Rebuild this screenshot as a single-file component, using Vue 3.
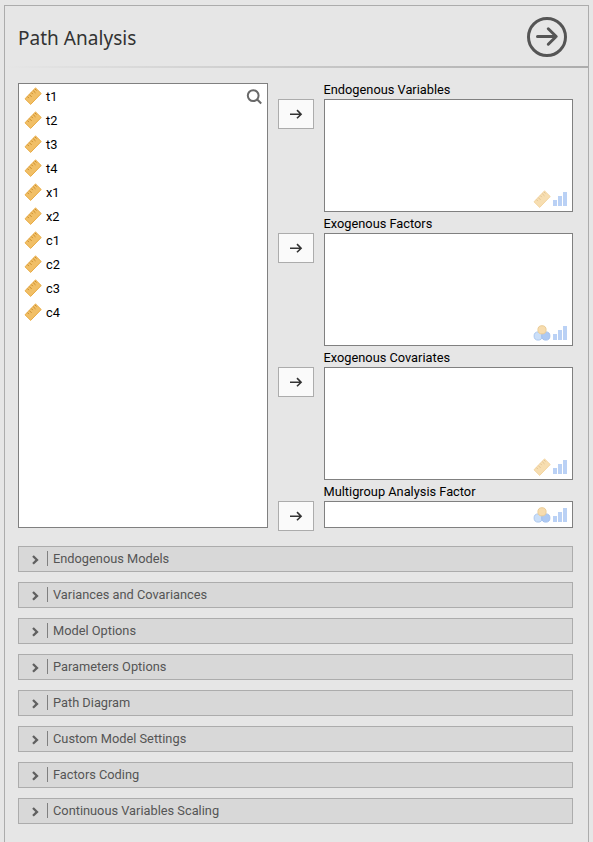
<script setup>
const variables = ['t1', 't2', 't3', 't4', 'x1', 'x2', 'c1', 'c2', 'c3', 'c4']
const targets = [
  { label: 'Endogenous Variables', kind: 'ruler' },
  { label: 'Exogenous Factors', kind: 'nominal' },
  { label: 'Exogenous Covariates', kind: 'ruler' },
  { label: 'Multigroup Analysis Factor', kind: 'nominal', single: true },
]
const sections = [
  'Endogenous Models',
  'Variances and Covariances',
  'Model Options',
  'Parameters Options',
  'Path Diagram',
  'Custom Model Settings',
  'Factors Coding',
  'Continuous Variables Scaling',
]
</script>

<template>
  <main class="panel">
    <header class="header">
      <h1>Path Analysis</h1>
      <svg class="go" width="40" height="40" viewBox="0 0 40 40">
        <circle cx="20" cy="20" r="18.5" />
        <path d="M10.5 19.5H29M21.3 11.8L29.2 19.5L21.3 27.2" />
      </svg>
    </header>
    <div class="rule"></div>

    <section class="assign">
      <div class="source">
        <ul>
          <li v-for="v in variables" :key="v">
            <svg class="ruler" width="18" height="18" viewBox="0 0 18 18">
              <path class="body" d="M11.5 0.9L17.2 6.5L6.7 17.4L1 11.8Z" />
              <path class="ticks" d="M3.4 9.6l1.5 1.5M5.3 7.6l2.3 2.3M7.3 5.6l1.5 1.5M9.2 3.6l2.3 2.3M11 2l1.5 1.5" />
            </svg>
            <span>{{ v }}</span>
          </li>
        </ul>
        <svg class="search" width="16" height="16" viewBox="0 0 16 16">
          <circle cx="7.2" cy="6.6" r="5.4" />
          <path d="M11 10.3L15.2 14.5" />
        </svg>
      </div>

      <div class="targets">
        <div v-for="t in targets" :key="t.label" class="target" :class="{ single: t.single }">
          <button class="move" type="button">
            <svg width="14" height="12" viewBox="0 0 14 12">
              <path d="M1 6.2H12M8 2.1L12.1 6.2L8 10.3" />
            </svg>
          </button>
          <div class="field">
            <label>{{ t.label }}</label>
            <div class="box">
              <div class="types">
                <svg v-if="t.kind === 'ruler'" class="ruler" width="18" height="18" viewBox="0 0 18 18">
                  <path class="body" d="M11.5 0.9L17.2 6.5L6.7 17.4L1 11.8Z" />
                  <path class="ticks" d="M3.4 9.6l1.5 1.5M5.3 7.6l2.3 2.3M7.3 5.6l1.5 1.5M9.2 3.6l2.3 2.3M11 2l1.5 1.5" />
                </svg>
                <svg v-else width="18" height="18" viewBox="0 0 18 18">
                  <circle cx="5.2" cy="12" r="4.1" fill="#cbdff8" stroke="#acc8f0" />
                  <circle cx="12.8" cy="12" r="4.1" fill="#adc9f3" stroke="#a2c0ee" />
                  <circle cx="9" cy="5.8" r="4.1" fill="#f7dcae" stroke="#ebcd98" />
                </svg>
                <svg width="18" height="18" viewBox="0 0 18 18">
                  <path fill="#bad1f5" d="M2 10h4v6H2zM7 6h4v10H7zM12 2h4v14h-4z" />
                </svg>
              </div>
            </div>
          </div>
        </div>
      </div>
    </section>

    <section class="sections">
      <div v-for="s in sections" :key="s" class="section">
        <svg width="8" height="10" viewBox="0 0 8 10">
          <path d="M1 1L5 4.9L1 8.8" />
        </svg>
        <i class="bar"></i>
        <span>{{ s }}</span>
      </div>
    </section>
  </main>
</template>

<style>
body {
  background: #e6e6e6;
  overflow: hidden;
}
</style>

<style scoped>
.panel {
  box-sizing: border-box;
  width: 585px;
  height: 837px;
  margin: 5px 0 0 4px;
  border: 1px solid #acacac;
  border-bottom: 0;
  font-family: Roboto, "Liberation Sans", sans-serif;
  font-size: 12.8px;
  color: #000;
}
svg {
  display: block;
  flex: none;
}
.header {
  display: flex;
  align-items: center;
  justify-content: space-between;
  height: 60px;
  padding: 0 21px 0 13px;
  box-sizing: border-box;
}
h1 {
  margin: 0;
  padding-top: 3px;
  font: 400 19px/26px "Noto Sans", sans-serif;
  letter-spacing: 0.03px;
  color: #333;
}
.go {
  margin-top: 2px;
  fill: none;
  stroke: #555;
  stroke-width: 3;
  stroke-linecap: round;
  stroke-linejoin: round;
}
.rule {
  height: 2px;
  background: linear-gradient(to right, #e6e6e6, #acacac);
}
.assign {
  display: flex;
  gap: 10px;
  padding: 15px 15px 0 13px;
}
.source {
  box-sizing: border-box;
  display: flex;
  justify-content: space-between;
  width: 250px;
  height: 445px;
  border: 1px solid #808080;
  background: #fff;
}
ul {
  list-style: none;
  margin: 0;
  padding: 0 0 0 5px;
}
li {
  display: flex;
  align-items: center;
  gap: 4px;
  height: 24px;
  line-height: 16px;
}
li span {
  padding-top: 2px;
}
.ruler .body {
  fill: #f1bf66;
  stroke: #e8aa42;
  stroke-linejoin: round;
}
.ruler .ticks {
  fill: none;
  stroke: #c98c2c;
}
.search {
  margin: 5px 5px 0 0;
  fill: none;
  stroke: #696969;
  stroke-width: 2;
}
.targets {
  display: flex;
  flex-direction: column;
}
.target {
  display: flex;
  gap: 10px;
  height: 134px;
}
.target.single {
  height: 43px;
}
.move {
  box-sizing: border-box;
  display: flex;
  align-items: center;
  justify-content: center;
  width: 36px;
  height: 30px;
  margin: 16px 0 0;
  padding: 0;
  border: 1px solid #acacac;
  background: #fafafa;
}
.move svg {
  fill: none;
  stroke: #333;
  stroke-width: 1.6;
}
.field {
  width: 249px;
}
label {
  display: block;
  height: 16px;
  margin-left: -0.5px;
  line-height: 14px;
}
.box {
  box-sizing: border-box;
  display: flex;
  align-items: flex-end;
  justify-content: flex-end;
  height: 113px;
  padding: 0 3px 3px 0;
  border: 1px solid #808080;
  background: #fff;
}
.single .box {
  height: 27px;
}
.types {
  display: flex;
}
.types .ruler {
  opacity: 0.5;
}
.sections {
  display: flex;
  flex-direction: column;
  gap: 10px;
  padding: 18px 15px 0 13px;
}
.section {
  box-sizing: border-box;
  display: flex;
  align-items: flex-start;
  height: 26px;
  padding: 4px 0 0 13px;
  border: 1px solid #acacac;
  background: #d8d8d8;
  color: #555;
  line-height: 16px;
}
.section svg {
  margin-top: 4px;
  fill: none;
  stroke: #606060;
  stroke-width: 2.3;
}
.bar {
  width: 1px;
  height: 15px;
  margin: 0 5px 0 7px;
  background: #808080;
}
</style>
